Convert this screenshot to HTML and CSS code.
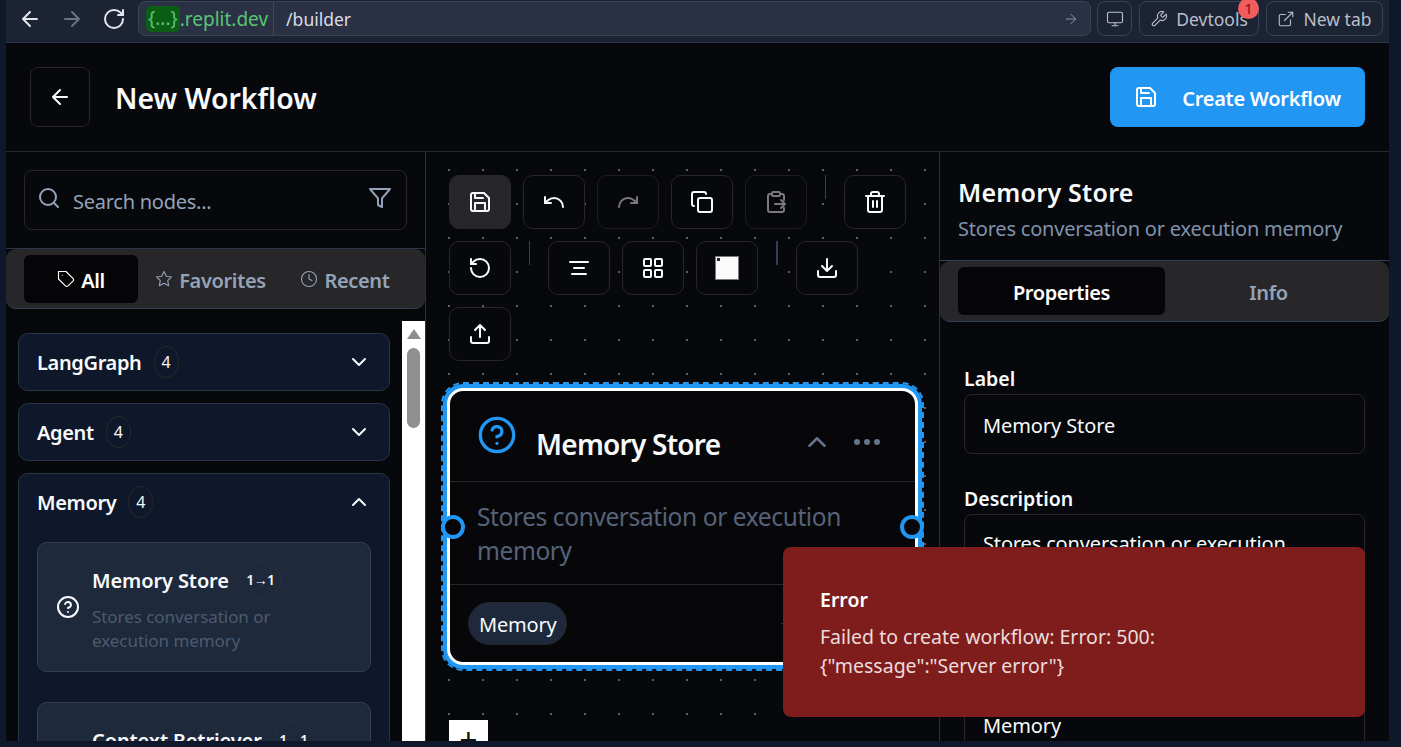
FILE: index.html
```html
<!DOCTYPE html>
<html lang="en">
<head>
    <meta charset="UTF-8">
    <meta name="viewport" content="width=device-width, initial-scale=1.0">
    <title>New Workflow</title>
    <link rel="stylesheet" href="styles.css">
</head>
<body>
    <svg class="sprite" xmlns="http://www.w3.org/2000/svg">
        <symbol id="i-arrow-left" viewBox="0 0 24 24"><path d="M12 19l-7-7 7-7M19 12H5"/></symbol>
        <symbol id="i-arrow-right" viewBox="0 0 24 24"><path d="M5 12h14M12 5l7 7-7 7"/></symbol>
        <symbol id="i-reload" viewBox="0 0 24 24"><path d="M21 12a9 9 0 1 1-9-9c2.52 0 4.93 1 6.74 2.74L21 8"/><path d="M21 3v5h-5"/></symbol>
        <symbol id="i-monitor" viewBox="0 0 24 24"><rect x="2" y="3" width="20" height="14" rx="2"/><path d="M8 21h8M12 17v4"/></symbol>
        <symbol id="i-wrench" viewBox="0 0 24 24"><path d="M14.7 6.3a1 1 0 0 0 0 1.4l1.6 1.6a1 1 0 0 0 1.4 0l3.77-3.77a6 6 0 0 1-7.94 7.94l-6.91 6.91a2.12 2.12 0 0 1-3-3l6.91-6.91a6 6 0 0 1 7.94-7.94l-3.76 3.76z"/></symbol>
        <symbol id="i-external" viewBox="0 0 24 24"><path d="M18 13v6a2 2 0 0 1-2 2H5a2 2 0 0 1-2-2V8a2 2 0 0 1 2-2h6"/><path d="M15 3h6v6M10 14 21 3"/></symbol>
        <symbol id="i-save" viewBox="0 0 24 24"><path d="M19 21H5a2 2 0 0 1-2-2V5a2 2 0 0 1 2-2h11l5 5v11a2 2 0 0 1-2 2z"/><path d="M17 21v-8H7v8M7 3v5h8"/></symbol>
        <symbol id="i-search" viewBox="0 0 24 24"><circle cx="11" cy="11" r="8"/><path d="M21 21l-4.35-4.35"/></symbol>
        <symbol id="i-filter" viewBox="0 0 24 24"><path d="M22 3H2l8 9.46V19l4 2v-8.54L22 3z"/></symbol>
        <symbol id="i-tag" viewBox="0 0 24 24"><path d="M12 2H2v10l9.29 9.29c.94.94 2.48.94 3.42 0l6.58-6.58c.94-.94.94-2.48 0-3.42L12 2Z"/><path d="M7 7h.01"/></symbol>
        <symbol id="i-star" viewBox="0 0 24 24"><path d="M12 2l3.09 6.26L22 9.27l-5 4.87 1.18 6.88L12 17.77l-6.18 3.25L7 14.14 2 9.27l6.91-1.01L12 2z"/></symbol>
        <symbol id="i-clock" viewBox="0 0 24 24"><circle cx="12" cy="12" r="10"/><path d="M12 6v6l4 2"/></symbol>
        <symbol id="i-chevron-down" viewBox="0 0 24 24"><path d="m6 9 6 6 6-6"/></symbol>
        <symbol id="i-chevron-up" viewBox="0 0 24 24"><path d="m18 15-6-6-6 6"/></symbol>
        <symbol id="i-help" viewBox="0 0 24 24"><circle cx="12" cy="12" r="10"/><path d="M9.09 9a3 3 0 0 1 5.83 1c0 2-3 3-3 3M12 17h.01"/></symbol>
        <symbol id="i-undo" viewBox="0 0 24 24"><path d="M3 7v6h6"/><path d="M21 17a9 9 0 0 0-9-9 9 9 0 0 0-6 2.3L3 13"/></symbol>
        <symbol id="i-redo" viewBox="0 0 24 24"><path d="M21 7v6h-6"/><path d="M3 17a9 9 0 0 1 9-9 9 9 0 0 1 6 2.3l3 2.7"/></symbol>
        <symbol id="i-copy" viewBox="0 0 24 24"><rect x="8" y="8" width="14" height="14" rx="2"/><path d="M4 16c-1.1 0-2-.9-2-2V4c0-1.1.9-2 2-2h10c1.1 0 2 .9 2 2"/></symbol>
        <symbol id="i-paste" viewBox="0 0 24 24"><rect x="8" y="2" width="8" height="4" rx="1"/><path d="M8 4H6a2 2 0 0 0-2 2v14a2 2 0 0 0 2 2h12a2 2 0 0 0 2-2v-2M16 4h2a2 2 0 0 1 2 2v4M11 14h10M17 10l4 4-4 4"/></symbol>
        <symbol id="i-trash" viewBox="0 0 24 24"><path d="M3 6h18M19 6v14c0 1-1 2-2 2H7c-1 0-2-1-2-2V6M8 6V4c0-1 1-2 2-2h4c1 0 2 1 2 2v2M10 11v6M14 11v6"/></symbol>
        <symbol id="i-reset" viewBox="0 0 24 24"><path d="M3 12a9 9 0 1 0 9-9 9.75 9.75 0 0 0-6.74 2.74L3 8"/><path d="M3 3v5h5"/></symbol>
        <symbol id="i-align" viewBox="0 0 24 24"><path d="M21 6H3M17 12H7M19 18H5"/></symbol>
        <symbol id="i-grid" viewBox="0 0 24 24"><rect x="3" y="3" width="7" height="7" rx="1"/><rect x="14" y="3" width="7" height="7" rx="1"/><rect x="14" y="14" width="7" height="7" rx="1"/><rect x="3" y="14" width="7" height="7" rx="1"/></symbol>
        <symbol id="i-download" viewBox="0 0 24 24"><path d="M21 15v4a2 2 0 0 1-2 2H5a2 2 0 0 1-2-2v-4M7 10l5 5 5-5M12 15V3"/></symbol>
        <symbol id="i-upload" viewBox="0 0 24 24"><path d="M21 15v4a2 2 0 0 1-2 2H5a2 2 0 0 1-2-2v-4M17 8l-5-5-5 5M12 3v12"/></symbol>
    </svg>

    <div class="frame">
        <!-- replit webview bar -->
        <div class="browser-bar">
            <div class="nav-icons">
                <svg class="icon nav-icon"><use href="#i-arrow-left"/></svg>
                <svg class="icon nav-icon nav-off"><use href="#i-arrow-right"/></svg>
                <svg class="icon nav-icon"><use href="#i-reload"/></svg>
            </div>
            <div class="address">
                <span class="address-host"><span class="host-mask">{...}</span>.replit.dev</span>
                <span class="address-path">/builder</span>
                <svg class="icon address-go"><use href="#i-arrow-right"/></svg>
            </div>
            <button class="bar-btn bar-btn-square"><svg class="icon"><use href="#i-monitor"/></svg></button>
            <button class="bar-btn bar-btn-dev"><svg class="icon"><use href="#i-wrench"/></svg>Devtools<span class="bar-badge">1</span></button>
            <button class="bar-btn bar-btn-tab"><svg class="icon"><use href="#i-external"/></svg>New tab</button>
        </div>

        <div class="app">
            <header class="app-header">
                <button class="back-btn"><svg class="icon"><use href="#i-arrow-left"/></svg></button>
                <h1 class="app-title">New Workflow</h1>
                <button class="create-btn"><svg class="icon"><use href="#i-save"/></svg><span class="create-label">Create Workflow</span></button>
            </header>

            <div class="workspace">
                <!-- node palette -->
                <aside class="sidebar">
                    <div class="search-wrap">
                        <div class="search">
                            <svg class="icon search-icon"><use href="#i-search"/></svg>
                            <input class="search-input" type="text" placeholder="Search nodes...">
                            <svg class="icon filter-icon"><use href="#i-filter"/></svg>
                        </div>
                    </div>
                    <div class="side-tabs">
                        <div class="side-tab active"><svg class="icon"><use href="#i-tag"/></svg>All</div>
                        <div class="side-tab"><svg class="icon"><use href="#i-star"/></svg>Favorites</div>
                        <div class="side-tab"><svg class="icon"><use href="#i-clock"/></svg>Recent</div>
                    </div>
                    <div class="list-wrap">
                        <div class="node-list">
                            <div class="group">
                                <div class="group-head"><span class="group-name">LangGraph</span><span class="count">4</span><svg class="icon chevron"><use href="#i-chevron-down"/></svg></div>
                            </div>
                            <div class="group">
                                <div class="group-head"><span class="group-name">Agent</span><span class="count">4</span><svg class="icon chevron"><use href="#i-chevron-down"/></svg></div>
                            </div>
                            <div class="group">
                                <div class="group-head"><span class="group-name">Memory</span><span class="count">4</span><svg class="icon chevron"><use href="#i-chevron-up"/></svg></div>
                                <div class="group-body">
                                    <div class="item">
                                        <svg class="icon item-icon"><use href="#i-help"/></svg>
                                        <div class="item-text">
                                            <div class="item-title">Memory Store<span class="io">1→1</span></div>
                                            <div class="item-desc">Stores conversation or execution memory</div>
                                        </div>
                                    </div>
                                    <div class="item">
                                        <svg class="icon item-icon"><use href="#i-help"/></svg>
                                        <div class="item-text">
                                            <div class="item-title">Context Retriever<span class="io">1→1</span></div>
                                            <div class="item-desc">Retrieves context from memory</div>
                                        </div>
                                    </div>
                                </div>
                            </div>
                        </div>
                        <div class="scrollbar">
                            <div class="scroll-up"></div>
                            <div class="scroll-thumb"></div>
                        </div>
                    </div>
                </aside>

                <!-- flow canvas -->
                <main class="canvas">
                    <div class="toolbar">
                        <button class="tool tool-active"><svg class="icon"><use href="#i-save"/></svg></button>
                        <button class="tool"><svg class="icon"><use href="#i-undo"/></svg></button>
                        <button class="tool tool-off"><svg class="icon"><use href="#i-redo"/></svg></button>
                        <button class="tool"><svg class="icon"><use href="#i-copy"/></svg></button>
                        <button class="tool tool-off"><svg class="icon"><use href="#i-paste"/></svg></button>
                        <span class="tool-sep"></span>
                        <button class="tool"><svg class="icon"><use href="#i-trash"/></svg></button>
                        <button class="tool"><svg class="icon"><use href="#i-reset"/></svg></button>
                        <span class="tool-sep"></span>
                        <button class="tool"><svg class="icon"><use href="#i-align"/></svg></button>
                        <button class="tool"><svg class="icon"><use href="#i-grid"/></svg></button>
                        <button class="tool"><span class="map-square"><span class="map-dot"></span></span></button>
                        <span class="tool-sep tool-sep-wide"></span>
                        <button class="tool"><svg class="icon"><use href="#i-download"/></svg></button>
                        <button class="tool"><svg class="icon"><use href="#i-upload"/></svg></button>
                    </div>

                    <div class="node">
                        <span class="handle handle-in"></span>
                        <span class="handle handle-out"></span>
                        <div class="node-head">
                            <svg class="icon node-icon"><use href="#i-help"/></svg>
                            <span class="node-title">Memory Store</span>
                            <svg class="icon node-chevron"><use href="#i-chevron-up"/></svg>
                            <span class="node-more"><i></i><i></i><i></i></span>
                        </div>
                        <div class="node-desc">Stores conversation or execution memory</div>
                        <div class="node-foot"><span class="pill">Memory</span><span class="foot-mark"></span></div>
                    </div>

                    <button class="zoom-btn">+</button>
                </main>

                <!-- properties -->
                <aside class="panel">
                    <div class="panel-head">
                        <h2 class="panel-title">Memory Store</h2>
                        <p class="panel-sub">Stores conversation or execution memory</p>
                    </div>
                    <div class="panel-tabs">
                        <div class="panel-tab active">Properties</div>
                        <div class="panel-tab">Info</div>
                    </div>
                    <form class="props">
                        <label class="prop-label">Label</label>
                        <input class="prop-input" type="text" value="Memory Store">
                        <label class="prop-label">Description</label>
                        <textarea class="prop-input prop-area">Stores conversation or execution memory</textarea>
                        <label class="prop-label">Category</label>
                        <input class="prop-input" type="text" value="Memory">
                    </form>
                </aside>
            </div>
        </div>

        <div class="toast">
            <div class="toast-title">Error</div>
            <div class="toast-text">Failed to create workflow: Error: 500: {"message":"Server error"}</div>
        </div>
    </div>
</body>
</html>
```

FILE: styles.css
```css
* {
    box-sizing: border-box;
}

html, body {
    height: 100%;
}

body {
    margin: 0;
    overflow: hidden;
    background-color: #0f172a;
    color: #f8fafc;
    font-family: "Noto Sans", "Open Sans", sans-serif;
}

button {
    font-family: inherit;
    cursor: pointer;
}

.sprite {
    display: none;
}

.icon {
    width: 24px;
    height: 24px;
    flex: none;
    fill: none;
    stroke: currentColor;
    stroke-width: 2;
    stroke-linecap: round;
    stroke-linejoin: round;
}

.frame {
    height: 747px;
    padding: 0 12px 6px 6px;
    display: flex;
    flex-direction: column;
}

/* browser bar */
.browser-bar {
    height: 43px;
    flex: none;
    display: flex;
    gap: 7px;
    padding-top: 1px;
    padding-right: 6px;
    background-color: #1c2333;
    border-bottom: 1px solid #2b3345;
}

.nav-icons {
    width: 125px;
    display: flex;
    align-items: center;
    gap: 18px;
    padding: 0 0 6px 12px;
    color: #e4e6eb;
}

.nav-off {
    color: #6b7280;
}

.address {
    flex: 1;
    height: 35px;
    margin-right: -1px;
    display: flex;
    align-items: center;
    background-color: #2b3145;
    border: 1px solid #3a4258;
    border-radius: 7px;
    font-size: 19px;
}

.address-host {
    height: 100%;
    display: flex;
    align-items: center;
    padding: 0 5px 0 7px;
    color: #58c472;
    border-right: 1px solid #3f475e;
}

.host-mask {
    height: 26px;
    padding: 0 2px;
    line-height: 25px;
    background-color: #0b5c15;
    border-radius: 5px;
}

.address-path {
    flex: 1;
    padding-left: 12px;
    color: #d9dce3;
    font-size: 17.5px;
}

.address-go {
    width: 16px;
    height: 16px;
    margin-right: 11px;
    color: #8d93a3;
    stroke-width: 1.5;
}

.bar-btn {
    position: relative;
    height: 35px;
    display: flex;
    align-items: center;
    justify-content: center;
    gap: 8px;
    padding: 0;
    background: none;
    border: 1px solid #3a4258;
    border-radius: 8px;
    color: #b9bec9;
    font-size: 17.5px;
}

.bar-btn .icon {
    width: 18px;
    height: 18px;
    stroke-width: 1.5;
}

.bar-btn-square {
    width: 35px;
}

.bar-btn-dev {
    width: 120px;
}

.bar-btn-tab {
    width: 117px;
}

.bar-badge {
    position: absolute;
    top: -4px;
    right: -1px;
    width: 21px;
    height: 21px;
    border-radius: 50%;
    background-color: #f25c5c;
    color: #7a1111;
    font-size: 15px;
    line-height: 21px;
    text-align: center;
}

/* app */
.app {
    flex: 1;
    min-height: 0;
    display: flex;
    flex-direction: column;
    background-color: #07080b;
}

.app-header {
    height: 109px;
    flex: none;
    display: flex;
    align-items: center;
    padding: 0 24px;
    border-bottom: 1px solid #27272f;
}

.back-btn {
    width: 60px;
    height: 60px;
    display: flex;
    align-items: center;
    justify-content: center;
    background: none;
    border: 1px solid #27272a;
    border-radius: 8px;
    color: #f8fafc;
}

.app-title {
    flex: 1;
    margin: 2px 0 0 25px;
    font-size: 28.4px;
    font-weight: 600;
}

.create-btn {
    width: 255px;
    height: 60px;
    display: flex;
    align-items: center;
    justify-content: center;
    gap: 24px;
    background-color: #2196f3;
    border: none;
    border-radius: 8px;
    color: #fff;
    font-size: 20px;
    font-weight: 600;
    letter-spacing: -0.27px;
}

.create-label {
    padding-top: 2px;
}

.workspace {
    flex: 1;
    min-height: 0;
    display: flex;
}

/* sidebar */
.sidebar {
    width: 420px;
    flex: none;
    display: flex;
    flex-direction: column;
    border-right: 1px solid #27303f;
}

.search-wrap {
    padding: 18px;
    border-bottom: 1px solid #2b3648;
}

.search {
    height: 60px;
    display: flex;
    align-items: center;
    padding: 0 14px 0 12px;
    border: 1px solid #27272a;
    border-radius: 8px;
}

.search-icon, .filter-icon {
    color: #94a3b8;
    margin-bottom: 5px;
}

.search-input {
    flex: 1;
    min-width: 0;
    padding: 2px 0 0 12px;
    background: none;
    border: none;
    outline: none;
    color: #f8fafc;
    font-family: inherit;
    font-size: 20px;
    letter-spacing: -0.25px;
}

.search-input::placeholder {
    color: #94a3b8;
    opacity: 1;
}

.side-tabs {
    height: 60px;
    flex: none;
    display: grid;
    grid-template-columns: 114px 145px 124px;
    align-items: center;
    padding: 0 18px;
    background-color: #27272a;
    border-bottom: 1px solid #334155;
    border-radius: 10px;
}

.side-tab {
    height: 48px;
    display: flex;
    align-items: center;
    justify-content: center;
    gap: 6px;
    padding-top: 3px;
    color: #94a3b8;
    font-size: 20px;
    font-weight: 600;
    letter-spacing: -0.35px;
}

.side-tab .icon {
    width: 18px;
    height: 18px;
    margin-bottom: 3px;
    stroke-width: 1.5;
}

.side-tab.active {
    background-color: #050507;
    border-radius: 6px;
    color: #fff;
}

.list-wrap {
    flex: 1;
    min-height: 0;
    display: flex;
    margin-top: 12px;
    overflow: hidden;
}

.node-list {
    flex: 1;
    min-width: 0;
    display: flex;
    flex-direction: column;
    gap: 12px;
    padding: 12px;
}

.group {
    background-color: #0f172a;
    border: 1px solid #283548;
    border-radius: 10px;
}

.group-head {
    height: 56px;
    display: flex;
    align-items: center;
    padding: 0 18px;
}

.group-name {
    font-size: 20px;
    font-weight: 600;
    letter-spacing: -0.35px;
}

.count {
    width: 25px;
    height: 32px;
    margin-left: 12px;
    border: 1px solid #27272a;
    border-radius: 50%;
    font-size: 16px;
    line-height: 30px;
    text-align: center;
}

.chevron {
    margin-left: auto;
}

.group-body {
    display: flex;
    flex-direction: column;
    gap: 30px;
    padding: 12px 18px 0;
}

.item {
    height: 130px;
    flex: none;
    display: flex;
    align-items: center;
    padding: 0 18px;
    background-color: #1e293b;
    border: 1px solid #334155;
    border-radius: 10px;
}

.item-icon {
    margin-right: 12px;
}

.item-title {
    display: flex;
    align-items: center;
    height: 38px;
    font-size: 20px;
    font-weight: 600;
    letter-spacing: -0.1px;
}

.io {
    width: 41px;
    height: 38px;
    margin-left: 11px;
    border: 1px solid #27303f;
    border-radius: 50%;
    font-size: 14px;
    letter-spacing: -0.6px;
    line-height: 36px;
    text-align: center;
}

.item-desc {
    margin-top: 6px;
    width: 200px;
    color: #4d5b70;
    font-size: 17px;
    letter-spacing: -0.05px;
    line-height: 24px;
}

.scrollbar {
    width: 23px;
    flex: none;
    background-color: #fff;
}

.scroll-up {
    width: 0;
    height: 0;
    margin: 8px auto 0;
    border-left: 7px solid transparent;
    border-right: 7px solid transparent;
    border-bottom: 10px solid #8f8f8f;
}

.scroll-thumb {
    width: 13px;
    height: 80px;
    margin: 9px auto 0;
    background-color: #8f8f8f;
    border-radius: 7px;
}

/* canvas */
.canvas {
    position: relative;
    flex: 1;
    min-width: 0;
    overflow: hidden;
    background-color: #07080b;
    background-image: radial-gradient(circle, #5f6066 1px, transparent 1.2px);
    background-size: 34px 34px;
    background-position: 6px 1px;
}

.toolbar {
    display: flex;
    flex-wrap: wrap;
    align-items: flex-start;
    gap: 12px;
    padding: 23px 30px 0 23px;
}

.tool {
    width: 62px;
    height: 54px;
    display: flex;
    align-items: center;
    justify-content: center;
    padding: 0;
    background-color: #07080b;
    border: 1px solid #27272a;
    border-radius: 10px;
    color: #f8fafc;
}

.tool-active {
    background-color: #27272a;
}

.tool-off {
    color: #7a7a7e;
    border-color: #1d1d20;
}

.tool-sep {
    width: 1px;
    height: 24px;
    margin: 0 6px;
    background-color: #334155;
}

.tool-sep-wide {
    width: 2px;
}

.map-square {
    position: relative;
    width: 24px;
    height: 24px;
    background-color: #fafafa;
    border: 1px solid #77777c;
}

.map-dot {
    position: absolute;
    top: 1px;
    left: 1px;
    width: 3px;
    height: 3px;
    background-color: #222;
}

.node {
    position: absolute;
    left: 21px;
    top: 236px;
    width: 471px;
    height: 277px;
    display: flex;
    flex-direction: column;
    background-color: #07070a;
    border: 3px solid #fff;
    border-radius: 16px;
    box-shadow: 0 0 0 4px #2196f3;
    outline: 2px dashed #2196f3;
    outline-offset: 4px;
}

.handle {
    position: absolute;
    top: 124px;
    width: 24px;
    height: 24px;
    background-color: #07070a;
    border: 4px solid #2196f3;
    border-radius: 50%;
}

.handle-in {
    left: -9px;
}

.handle-out {
    right: -9px;
}

.node-head {
    height: 91px;
    flex: none;
    display: flex;
    align-items: center;
    padding: 0 35px 0 27px;
    border-bottom: 1px solid #27272a;
}

.node-icon {
    width: 40px;
    height: 40px;
    margin-bottom: 3px;
    color: #2196f3;
}

.node-title {
    flex: 1;
    margin: 16px 0 0 19px;
    font-size: 28px;
    font-weight: 600;
    letter-spacing: -0.75px;
}

.node-chevron {
    width: 30px;
    height: 30px;
    margin: 12px 22px 0 0;
    color: #64748b;
}

.node-more {
    display: flex;
    gap: 4px;
    margin-top: 12px;
}

.node-more i {
    width: 6px;
    height: 6px;
    background-color: #64748b;
    border-radius: 50%;
}

.node-desc {
    height: 103px;
    flex: none;
    padding: 18px 30px 0 27px;
    border-bottom: 1px solid #27272a;
    color: #556378;
    font-size: 24.5px;
    letter-spacing: -0.4px;
    line-height: 34px;
}

.node-foot {
    flex: 1;
    display: flex;
    align-items: center;
    padding-left: 18px;
}

.pill {
    height: 43px;
    padding: 1px 10px 0;
    background-color: #1e293b;
    border: 1px solid #27272a;
    border-radius: 22px;
    font-size: 20px;
    letter-spacing: -0.2px;
    line-height: 41px;
}

/* sliver of the node footer that shows beside the toast */
.foot-mark {
    width: 3px;
    height: 1px;
    margin-left: 214px;
    background-color: #1e3a5f;
}

.zoom-btn {
    position: absolute;
    left: 23px;
    top: 568px;
    width: 39px;
    height: 39px;
    padding: 0;
    background-color: #fff;
    border: none;
    color: #111;
    font-size: 32px;
    line-height: 39px;
}

/* properties panel */
.panel {
    flex: none;
    width: 450px;
    display: flex;
    flex-direction: column;
    border-left: 1px solid #27303f;
    overflow: hidden;
}

.panel-head {
    height: 109px;
    flex: none;
    padding: 21px 18px 0;
    border-bottom: 1px solid #334155;
}

.panel-title {
    margin: 0;
    font-size: 25px;
    font-weight: 600;
    letter-spacing: 0.25px;
    line-height: 38px;
}

.panel-sub {
    margin: 1px 0 0;
    color: #7f93ad;
    font-size: 20px;
    letter-spacing: -0.2px;
    line-height: 34px;
}

.panel-tabs {
    height: 61px;
    flex: none;
    display: grid;
    grid-template-columns: 207px 207px;
    align-items: center;
    padding: 0 18px;
    background-color: #27272a;
    border-bottom: 1px solid #334155;
    border-radius: 10px;
}

.panel-tab {
    height: 48px;
    display: flex;
    align-items: center;
    justify-content: center;
    padding-top: 2px;
    color: #94a3b8;
    font-size: 20px;
    font-weight: 600;
    letter-spacing: -0.4px;
}

.panel-tab.active {
    background-color: #050507;
    border-radius: 6px;
    color: #fff;
}

.props {
    display: flex;
    flex-direction: column;
    padding: 43px 24px 0;
}

.prop-label {
    height: 29px;
    font-size: 19.5px;
    font-weight: 600;
    line-height: 28px;
}

.prop-input {
    flex: none;
    width: 100%;
    height: 60px;
    margin-bottom: 31px;
    padding: 2px 18px 0;
    background: none;
    border: 1px solid #27272a;
    border-radius: 8px;
    outline: none;
    color: #f8fafc;
    font-family: inherit;
    font-size: 20px;
    letter-spacing: -0.1px;
}

.prop-area {
    height: 120px;
    padding-top: 14px;
    letter-spacing: -0.15px;
    line-height: 30px;
    resize: none;
    overflow: hidden;
}

/* toast */
.toast {
    position: absolute;
    right: 36px;
    bottom: 30px;
    width: 582px;
    height: 170px;
    padding: 38px 37px;
    background-color: #7f1d1d;
    border-radius: 8px;
    color: #fff;
}

.toast-title {
    font-size: 19.5px;
    font-weight: 600;
    line-height: 30px;
}

.toast-text {
    margin-top: 7px;
    width: 400px;
    color: #ecdcdc;
    font-size: 19.5px;
    line-height: 29px;
}
```
